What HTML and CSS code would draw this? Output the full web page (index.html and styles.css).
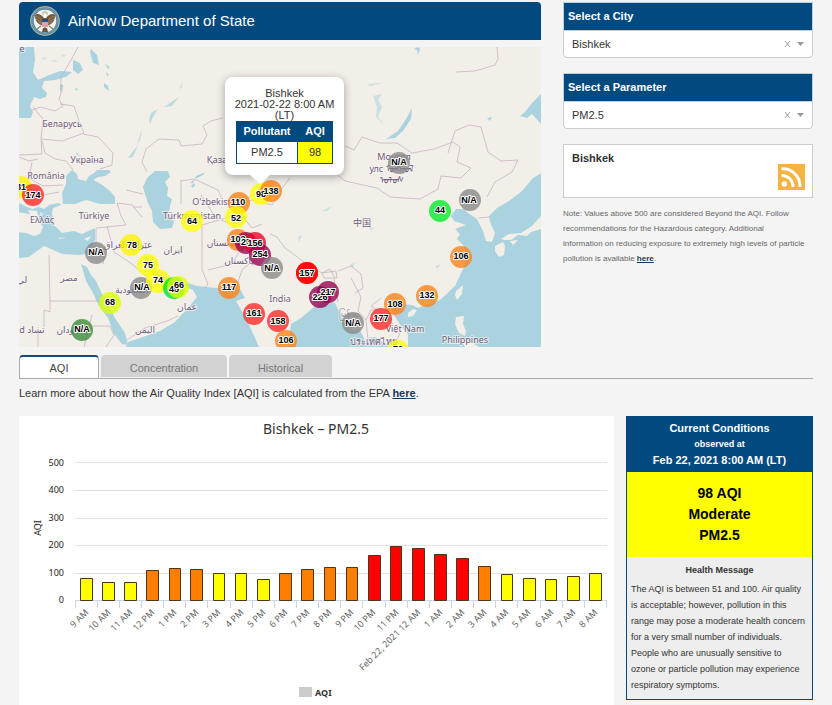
FILE: index.html
```html
<!DOCTYPE html>
<html lang="en">
<head>
<meta charset="utf-8">
<title>AirNow Department of State</title>
<link rel="stylesheet" href="styles.css">
</head>
<body>
<main class="page">
  <div class="top">
    <section class="primary">
      <header class="banner">
        <svg class="seal" viewBox="0 0 32 32" aria-hidden="true">
          <circle cx="16" cy="16" r="15" fill="#5d86a3"/>
          <circle cx="16" cy="16" r="14.4" fill="none" stroke="#a9b793" stroke-width="1"/>
          <circle cx="16" cy="16" r="12.7" fill="none" stroke="#7fa3b8" stroke-width="1.2" stroke-dasharray="1 1"/>
          <circle cx="16" cy="16" r="11.2" fill="#f4f6f5"/>
          <circle cx="16" cy="8.7" r="2.6" fill="#b9cfdf" stroke="#d8bd76" stroke-width=".7"/>
          <path d="M15 13C12 9 8 8 6 10c0 4 1 7 4 9l4 2 2-3 2 3 4-2c3-2 4-5 4-9-2-2-6-1-9 3l-1-3z" fill="#74583d"/>
          <path d="M7 11l6 4M7 14l6 3M9 17l5 2M25 11l-6 4M25 14l-6 3M23 17l-5 2" stroke="#b79d72" stroke-width=".6"/>
          <path d="M14 10l2-2 2 2-1 3h-2z" fill="#fff8e5"/>
          <path d="M13 15h6v5c0 2-1 3-3 4-2-1-3-2-3-4z" fill="#fff"/>
          <path d="M14 17v5M16 17v6M18 17v5" stroke="#bd4651" stroke-width="1"/>
          <path d="M13 14h6v3h-6z" fill="#294f82"/>
          <path d="M12 21l-4 3M20 21l4 3M14 25h4" stroke="#7d8c4b" stroke-width="1.4"/>
          <path d="M14 23l-1 4h6l-1-4z" fill="#6c543d"/>
        </svg>
        <h1>AirNow Department of State</h1>
      </header>
      <div class="map">
        <svg class="map-canvas" viewBox="19 47 522 300" preserveAspectRatio="xMidYMid slice" role="img" aria-label="Map of reporting cities">
          <g class="water">
            <path d="M19 47h15l1 13-2 12 5 8 9-4 13-5 12 1-6 5-11 3-11 1-2 7 5 5-1 4-6 2-6-2-4 9 3 6-2 6H19z"/>
            <path d="M60 84l3 1-1 8-2-3zM73 60l7 3 3 7-5 4-5-4zM91 49l6 6 2 10-6-2-3-11zM104 83l4 3 1 5-5-4zM75 88l3 1-2 2zM105 64l5 3-2 2zM106 72l3 3-2 1z"/>
            <path d="M66 176l6-6 5 4 1 5 8 2 3-5 5-3 3-3 12 0 2 2-6 4-7 1-5 3 8 4 9 7 5 6v7l-15 0-14-4-11 4-12 0-1-11 4-9z"/>
            <path d="M143 187l4-9 8-7h13l2 6-5 5 3 6-1 8 5 3-2 7-1 8 5 8-2 6-12 1-7-7-1-11-4-8-3-9z"/>
            <path d="M190 183l5-4 1-3 7-3 2 1-6 3-4 2-2 4zM191 186l3-3 1 2-2 3z"/>
            <path d="M19 203l6 3 7 3 7-2 5 2 5-4 10-2 2 2-8 3-1 6 2 11 8 8 12-2 8 3 13-6v11l-4 14-11 2-18-1-11-5-7-3-7 5-8 6-11 1v-26l8 1 8 3 6-2 3-7-5-7-9-6-11-2z"/>
            <path d="M81 264l6 3 4 8 5 6 6 13 6 10 7 14 10 15 3 12-6-1-8-10-6-16-9-12-6-13-7-12z"/>
            <path d="M143 255l7 4 8 14 12 8 10 5 8-3 9 3 30 3h13l5 9-9 3 7 12 6 12 7 15 3 7H126l2-5 12-4 20-7 15-9 13-14 9-11-4-7-9-4-11 1-8-2-9-7-8-12z"/>
            <path d="M288 347l3-23 10-6 13-11 12-6 9 2 5 10 4 8 8 10 7-2 5 9 2 9z"/>
            <path d="M365 347l3-9 7-1 6 4 10 6z"/>
            <path d="M408 347v-13l-7-8-9-14v-5l8-3 12 1 6 3 10-4 12-4 15-14 8-17 4-14-4-10-6-6 3-5-5-5 11-4-12-4-3-5 5-7h8l4 4 9 6 6 12 3 10 6 1 3-9-5-11-1-6 8-8 12-7 13-10 11-13 10-6v185z"/>
            <path d="M541 94l-9 9-7 9-5 4 7 2 5-4 9 10zM412 108l-1 11-8 12-8 7-9 1 12-8 8-12zM418 47l2 2-2 6-1-5-3-1zM487 118l5-1-2 4z"/>
            <path d="M151 113l7-4-5 8-3 7-1-5zM164 107l15-10-7 9zM180 88l3-6-2 7zM128 158l10-13-5 12zM137 144l5-15-2 11zM75 152l9 6-7-3z" opacity=".75"/>
            <path d="M367 84l15-1-12 3zM373 96l9-2-4 6 4 7-4 10 6 8-8-8 1-10zM322 211l10-5-5 5zM369 227l5 1-3 3zM436 266l5-2-4 5zM350 265l5-3-2 6zM298 237l4-2-3 7zM42 58l5-1-3 3zM52 60l6 1-4 1zM62 54l4 2-4 1z" opacity=".55"/>
          </g>
          <g class="land">
            <path d="M495 246l8-4 2 4-1 9-5 2-4-6zM501 239l8-5 12-1 11-7 9-10v13l-10 3-4 4-9-1-7 5-7 0zM506 186l7-7h12l-8 12-8 3zM510 241l8-1-5 5zM456 291l7-6-1 9-5 6-2-5zM408 313l5-4 4 1-4 6-5 1zM456 317l8-1-1 8 3 7-1 5-6-3-4-9zM461 338l8 3 10 6h-14zM395 300l4 2-2 5z"/>
            <path d="M28 210l9 1 2 8 3 9-7-4zM58 238l8-1-6 2zM84 239l7-3-3 5zM40 212l3 2-2 2z"/>
          </g>
          <path class="borders" d="M78 47l-8 15-9 15v16l-2 6 4 7-8 5-15-4-8 3M60 104l14 2 5 15 5 12-22 8-21-2 2-20-10-12M41 139l1 15-23 1M42 141l3 12 10 6 11 2 7 9M83 134l15 3 15 16-1 12-12 4M19 157l10 4 9-2M32 162l-3 16 14 8 20-1M27 190l16 5 16-3M117 203l15 2 10 12M117 203l4 13 5 9-30 3M126 190l17 4M133 207l9 0M142 162l4-13 13-10 20 1 2 6 21-2 5-9-4-9 8-5 12-3M142 162l5 10M181 180v24M181 181l13-2 24 11 6 14 7-6 17 0 12-9 14-5M201 195l15 23 13 5 14-6 9 11 10-4M243 217l-4-12 13-5 20 5 8-14 10-13M202 225v45l6 14-3 4M202 225l27-8M208 270l24-6 8-14 12-7 8-9M236 288l6-18 13-11 15-9M270 234l7 3 8 11 23 17 14 8 8-4 5 9M322 273l14-2 1 7h-13zM334 279l4 23M338 271l13-5 10 8 2 14-8 5M345 146l9 4 8-13 18 6 17 0 15 10 22-4 19-7 7 5-3 15 14 6-10 10-20-2-3 13-18 10-30-2-13-9-32-7-11-9M448 153l7-22 14-6 12 2 7 25 13 9 17-1-6 12-17 10-8 15M497 47l1 12-3 6-20 6-19 1M49 255l1 46h57M50 300v12l-6-2v22l-6 2v13M96 229v14l-3 12M107 226l7 26 18 12 16 14M127 340l18-12 22-7 11-5M351 278l10 19-3 14 8 9 5-10 10 0M366 320l2 20M381 298l-10 8 17 12 12 16-5 8M478 218l12-1M92 326l18 0 4 9-8 12M92 315l-8 32M105 253l-2 11"/>
          <g class="places">
            <text x="22" y="52">e</text><text x="62" y="127">Беларусь</text><text x="87" y="163">Україна</text><text x="46" y="179">România</text><text x="229" y="163">Қазақстан</text>
            <text x="42" y="223">Ελλάς</text><text x="94" y="219">Türkiye</text><text x="217" y="205">O'zbekiston</text><text x="192" y="219">Türkmenistan</text>
            <text x="128" y="248">عێراق العراق</text><text x="173" y="253">ایران</text><text x="225" y="246">افغانستان</text><text x="239" y="264">پاکستان</text>
            <text x="69" y="281">مصر</text><text x="132" y="293">السعودية</text><text x="187" y="310">عمان</text><text x="145" y="333">اليمن</text><text x="72" y="333">السودان</text><text x="36" y="333">تشاد</text><text x="22" y="333">d</text><text x="22" y="283">لي</text>
            <text x="280" y="302">India</text><text x="362" y="226">中国</text><text x="394" y="160">Монгол</text><text x="391" y="172">улс ᠮᠣᠩᠭᠣᠯ</text><text x="392" y="183">ᠤᠯᠤᠰ</text>
            <text x="405" y="332">Việt Nam</text><text x="373" y="345">ประเทศไทย</text><text x="465" y="343">Philippines</text><text x="349" y="317">မြန်မာ</text>
          </g>
          <g class="pins">
            <circle cx="21" cy="187" r="11" fill="#fff200"/><circle cx="33" cy="195" r="11" fill="#ff2626"/>
            <circle cx="96" cy="253" r="11" fill="#888"/><circle cx="131" cy="245" r="11" fill="#fff200"/>
            <circle cx="141" cy="288" r="11" fill="#888"/><circle cx="148" cy="265" r="11" fill="#ff0"/>
            <circle cx="158" cy="281" r="12" fill="#ff0"/><circle cx="174" cy="288" r="11" fill="#0d3"/>
            <circle cx="178" cy="287" r="11" fill="#df0"/><circle cx="110" cy="303" r="11" fill="#df0"/>
            <circle cx="82" cy="330" r="11" fill="#398a39"/><circle cx="192" cy="221" r="11" fill="#ff0"/>
            <circle cx="239" cy="203" r="11" fill="#ff8214"/><circle cx="236" cy="217" r="11" fill="#ff0"/>
            <circle cx="261" cy="194" r="11" fill="#ff0"/><circle cx="271" cy="191" r="11" fill="#ff8214"/>
            <circle cx="238" cy="240" r="11" fill="#ff8214"/><circle cx="246" cy="243" r="11" fill="#960050"/>
            <circle cx="255" cy="243" r="11" fill="#f00028"/><circle cx="260" cy="255" r="11" fill="#960050"/>
            <circle cx="272" cy="268" r="11" fill="#888"/><circle cx="229" cy="288" r="11" fill="#ff8214"/>
            <circle cx="254" cy="314" r="11" fill="#ff2626"/><circle cx="278" cy="321" r="11" fill="#ff2626"/>
            <circle cx="286" cy="341" r="11" fill="#ff8214"/><circle cx="307" cy="273" r="11" fill="#f00"/><circle cx="307" cy="273" r="11" fill="#f00"/>
            <circle cx="320" cy="297" r="11" fill="#960050"/><circle cx="328" cy="292" r="11" fill="#960050"/>
            <circle cx="353" cy="323" r="11" fill="#888"/><circle cx="395" cy="304" r="11" fill="#ff8214"/>
            <circle cx="381" cy="319" r="11" fill="#ff2626"/><circle cx="427" cy="296" r="11" fill="#ff8214"/>
            <circle cx="461" cy="257" r="11" fill="#ff8214"/><circle cx="440" cy="211" r="11" fill="#00eb28"/>
            <circle cx="470" cy="200" r="11" fill="#888"/><circle cx="399" cy="163" r="11" fill="#888"/>
            <circle cx="398" cy="351" r="11" fill="#ff0"/>
            <text x="21" y="190">81</text><text x="33" y="198">174</text><text x="96" y="255">N/A</text><text x="132" y="248">78</text>
            <text x="142" y="290">N/A</text><text x="148" y="268">75</text><text x="158" y="283">74</text><text x="174" y="292">45</text>
            <text x="179" y="288">66</text><text x="110" y="305">68</text><text x="82" y="332">N/A</text><text x="192" y="224">64</text>
            <text x="238" y="205">110</text><text x="236" y="221">52</text><text x="261" y="197">98</text><text x="271" y="194">138</text>
            <text x="238" y="242">102</text><text x="246" y="245">25</text><text x="255" y="246">156</text><text x="260" y="257">254</text>
            <text x="272" y="271">N/A</text><text x="229" y="290">117</text><text x="254" y="316">161</text><text x="278" y="324">158</text>
            <text x="286" y="343">106</text><text x="307" y="276">157</text><text x="320" y="300">226</text><text x="328" y="295">217</text>
            <text x="353" y="326">N/A</text><text x="395" y="307">108</text><text x="381" y="321">177</text><text x="427" y="298">132</text>
            <text x="461" y="259">106</text><text x="440" y="213">44</text><text x="469" y="203">N/A</text><text x="399" y="165">N/A</text>
            <text x="398" y="352">72</text>
          </g>
        </svg>
        <div class="popup">
          <p>Bishkek<br>2021-02-22 8:00 AM<br>(LT)</p>
          <table>
            <thead><tr><th>Pollutant</th><th>AQI</th></tr></thead>
            <tbody><tr><td>PM2.5</td><td class="moderate">98</td></tr></tbody>
          </table>
        </div>
      </div>
    </section>
    <aside class="side">
      <label class="side-title" for="city">Select a City</label>
      <div class="picker">
        <select id="city"><option>Bishkek</option></select>
        <button type="button" aria-label="Clear city"><svg viewBox="0 0 7 8"><path d="M1 1l5 6M6 1L1 7"/></svg></button>
        <svg class="caret" viewBox="0 0 7 4" aria-hidden="true"><path d="M0 0h7L3.500 4z"/></svg>
      </div>
      <label class="side-title" for="parameter">Select a Parameter</label>
      <div class="picker">
        <select id="parameter"><option>PM2.5</option></select>
        <button type="button" aria-label="Clear parameter"><svg viewBox="0 0 7 8"><path d="M1 1l5 6M6 1L1 7"/></svg></button>
        <svg class="caret" viewBox="0 0 7 4" aria-hidden="true"><path d="M0 0h7L3.500 4z"/></svg>
      </div>
      <div class="feed">
        <strong>Bishkek</strong>
        <a href="#feed" aria-label="RSS feed"><svg class="rss" viewBox="0 0 27 26"><path fill="#f5b340" d="M0 0h27v26H0z"/><circle cx="6.300" cy="20" r="2.800" fill="#fff"/><path d="M3.500 11.500A11 11 0 0 1 15 23M3.500 4.800A17.500 17.500 0 0 1 22 23" fill="none" stroke="#fff" stroke-width="3"/></svg></a>
      </div>
      <p class="note">Note: Values above 500 are considered Beyond the AQI. Follow recommendations for the Hazardous category. Additional<br>information on reducing exposure to extremely high levels of particle pollution is available <a href="#beyond">here</a>.</p>
    </aside>
  </div>
  <nav class="tabs">
    <button type="button" class="tab tab-active">AQI</button>
    <button type="button" class="tab tab-wide">Concentration</button>
    <button type="button" class="tab">Historical</button>
  </nav>
  <p class="learn">Learn more about how the Air Quality Index [AQI] is calculated from the EPA <a href="#epa">here</a>.</p>
  <div class="bottom">
    <section class="chart">
      <svg viewBox="19 416 595 289" role="img" aria-label="Bishkek PM2.5 hourly AQI">
        <text class="chart-title" x="316" y="434">Bishkek – PM2.5</text>
        <path class="grid" d="M75 462.500h532M75 490.500h532M75 518.500h532M75 545.500h532M75 573.500h532"/>
        <g class="scale"><text x="64" y="466">500</text><text x="64" y="493">400</text><text x="64" y="521">300</text><text x="64" y="548">200</text><text x="64" y="576">100</text><text x="64" y="603">0</text></g>
        <text class="axis-name" transform="translate(41 528) rotate(-90)">AQI</text>
        <path class="axis" d="M75 600.500h532M75.500 600v8M97.500 600v8M119.500 600v8M141.500 600v8M163.500 600v8M185.500 600v8M207.500 600v8M230.500 600v8M252.500 600v8M274.500 600v8M296.500 600v8M318.500 600v8M340.500 600v8M362.500 600v8M385.500 600v8M407.500 600v8M429.500 600v8M451.500 600v8M473.500 600v8M495.500 600v8M517.500 600v8M540.500 600v8M562.500 600v8M584.500 600v8M606.500 600v8"/>
        <g class="bars">
          <g fill="#ff0"><path d="M80.500 600.500v-22h12v22zM102.500 600.500v-18h12v18zM124.500 600.500v-18h12v18zM213.500 600.500v-27h11v27zM235.500 600.500v-27h11v27zM257.500 600.500v-21h12v21zM501.500 600.500v-26h11v26zM523.500 600.500v-22h12v22zM545.500 600.500v-21h11v21zM567.500 600.500v-24h12v24zM589.500 600.500v-27h12v27z"/></g>
          <g fill="#ff7e00"><path d="M146.500 600.500v-30h12v30zM169.500 600.500v-32h11v32zM190.500 600.500v-31h12v31zM279.500 600.500v-27h12v27zM301.500 600.500v-31h12v31zM324.500 600.500v-33h11v33zM346.500 600.500v-33h11v33zM478.500 600.500v-34h12v34z"/></g>
          <g fill="red"><path d="M368.500 600.500v-45h12v45zM390.500 600.500v-54h11v54zM412.500 600.500v-52h12v52zM434.500 600.500v-46h12v46zM456.500 600.500v-42h12v42z"/></g>
        </g>
        <g class="hours">
          <text transform="translate(89 613) rotate(-45)">9 AM</text><text transform="translate(111 613) rotate(-45)">10 AM</text><text transform="translate(133 613) rotate(-45)">11 AM</text><text transform="translate(155 613) rotate(-45)">12 PM</text><text transform="translate(177 613) rotate(-45)">1 PM</text><text transform="translate(199 613) rotate(-45)">2 PM</text><text transform="translate(221 613) rotate(-45)">3 PM</text><text transform="translate(244 613) rotate(-45)">4 PM</text><text transform="translate(266 613) rotate(-45)">5 PM</text><text transform="translate(288 613) rotate(-45)">6 PM</text><text transform="translate(310 613) rotate(-45)">7 PM</text><text transform="translate(332 613) rotate(-45)">8 PM</text><text transform="translate(354 613) rotate(-45)">9 PM</text><text transform="translate(376 613) rotate(-45)">10 PM</text><text transform="translate(399 613) rotate(-45)">11 PM</text><text transform="translate(421 613) rotate(-45)">Feb 22, 2021 12 AM</text><text transform="translate(443 613) rotate(-45)">1 AM</text><text transform="translate(465 613) rotate(-45)">2 AM</text><text transform="translate(487 613) rotate(-45)">3 AM</text><text transform="translate(509 613) rotate(-45)">4 AM</text><text transform="translate(531 613) rotate(-45)">5 AM</text><text transform="translate(554 613) rotate(-45)">6 AM</text><text transform="translate(576 613) rotate(-45)">7 AM</text><text transform="translate(598 613) rotate(-45)">8 AM</text>
        </g>
        <path fill="#ccc" d="M299 687h13v10h-13z"/><text class="legend" x="315" y="696">AQI</text>
      </svg>
    </section>
    <aside class="conditions">
      <header><h2>Current Conditions</h2><small>observed at</small><strong>Feb 22, 2021 8:00 AM (LT)</strong></header>
      <p class="reading">98 AQI<br>Moderate<br>PM2.5</p>
      <h3>Health Message</h3>
      <p class="message">The AQI is between 51 and 100. Air quality is acceptable; however, pollution in this range may pose a moderate health concern for a very small number of individuals. People who are unusually sensitive to ozone or particle pollution may experience respiratory symptoms.</p>
    </aside>
  </div>
</main>
</body>
</html>
```
FILE: styles.css
```css
* { box-sizing: border-box; }
body { margin: 0; background: #f4f4f4; color: #333; font: 11px/16px "Liberation Sans", Arial, sans-serif; }
h1, h2, h3, p { margin: 0; }
button, select { font: inherit; color: inherit; }
a { color: #12395f; font-weight: bold; text-decoration: underline; }
.page { padding: 2px 19px 0; }
.top { display: grid; grid-template-columns: minmax(0, 1fr) 250px; gap: 22px; }
.banner { display: flex; align-items: center; gap: 7px; height: 38px; padding: 0 10px; background: #004a80; color: #fff; border-radius: 4px 4px 0 0; }
.banner h1 { font-size: 15px; line-height: 20px; font-weight: normal; }
.seal { width: 32px; height: 32px; }
.map { position: relative; height: 300px; margin-top: 7px; overflow: hidden; background: #f2efe9; }
.map-canvas { display: block; width: 100%; height: 100%; }
.water { fill: #aad3df; }
.land { fill: #f2efe9; }
.borders { fill: none; stroke: #c5adc1; stroke-width: 1; opacity: .75; }
.places { font: 9px "Noto Sans", "DejaVu Sans", "Noto Sans CJK SC", sans-serif; fill: #705d7d; text-anchor: middle; stroke: #f8f6f3; stroke-width: 2; paint-order: stroke; stroke-opacity: .7; }
.pins circle { fill-opacity: .78; }
.pins text { font: bold 9px "Liberation Sans", Arial, sans-serif; fill: #000; text-anchor: middle; stroke: #fff; stroke-width: 2; stroke-linejoin: round; paint-order: stroke; }
.popup { position: absolute; left: 206px; top: 30px; width: 119px; padding: 11px; border-radius: 8px; background: #fff; box-shadow: 0 2px 8px #0005; text-align: center; line-height: 11px; white-space: nowrap; }
.popup p { margin: 0 -4px; }
.popup::after { content: ""; position: absolute; left: 25px; top: 98px; border: 10px solid transparent; border-top: 9px solid #fff; border-bottom: 0; }
.popup table { width: 100%; border-collapse: collapse; table-layout: fixed; }
.popup th { height: 20px; padding: 0; background: #004a80; color: #fff; border: 1px solid #004a80; }
.popup th:first-child { width: 61px; }
.popup td { height: 22px; padding: 0; border: 1px solid #004a80; }
.popup .moderate { background: #ff0; }
.side-title { display: block; height: 28px; padding: 5px 4px; border: 1px solid #bccfdf; border-bottom: 0; background: #004a80; color: #fff; font-weight: bold; }
.picker { display: flex; align-items: center; gap: 6px; height: 28px; margin-bottom: 15px; padding: 0 8px; border: 1px solid #ccc; border-radius: 0 0 4px 4px; background: #fff; }
.picker select { flex: 1; min-width: 0; height: 24px; padding: 0; appearance: none; border: 0; background: transparent; }
.picker button { display: flex; padding: 0; border: 0; background: transparent; }
.picker button svg { width: 7px; height: 8px; fill: none; stroke: #999; }
.caret { width: 7px; height: 4px; fill: #999; }
.feed { display: flex; justify-content: space-between; height: 54px; padding: 5px 7px 0 8px; border: 1px solid #ccc; background: #fff; }
.rss { display: block; width: 27px; height: 26px; margin-top: 14px; }
.note { margin-top: 8px; font-size: 8px; line-height: 15px; color: #666; }
.tabs { display: flex; align-items: flex-end; gap: 2px; margin-top: 8px; border-bottom: 1px solid #aaa; }
.tab { width: 103px; height: 22px; padding: 3px 0 0; border: 0; border-radius: 4px 4px 0 0; margin-bottom: 1px; background: #d2d2d2; color: #777; }
.tab-active { width: 80px; height: 23px; padding: 1px 0 0; margin-bottom: 0; border: 1px solid #aaa; border-top: 2px solid #174b78; border-bottom: 0; background: #fff; color: #444; }
.tab-wide { width: 126px; }
.learn { margin: 6px 0 15px; }
.bottom { display: grid; grid-template-columns: minmax(0, 1fr) 187px; gap: 12px; align-items: start; }
.chart { background: #fff; }
.chart svg { display: block; width: 100%; font-family: "Noto Sans", sans-serif; }
.chart-title { font-size: 14px; fill: #333; text-anchor: middle; }
.grid { stroke: #e2e2e2; }
.scale { font-size: 9px; fill: #222; text-anchor: end; }
.axis-name { font-size: 9px; fill: #222; text-anchor: middle; }
.axis { stroke: #ccd6eb; }
.bars { stroke: #493719; stroke-width: 1; }
.hours { font-size: 9px; fill: #666; text-anchor: end; }
.legend { font-size: 9px; font-weight: bold; fill: #333; }
.conditions { border: 1px solid #004a80; background: #eee; }
.conditions header { display: grid; align-content: start; height: 55px; padding-top: 3px; background: #004a80; color: #fff; font-weight: bold; text-align: center; }
.conditions h2 { font-size: 11px; line-height: 16px; }
.conditions small { font-size: 9px; line-height: 16px; }
.reading { height: 85px; padding-top: 11px; background: #ff0; color: #000; font-size: 14px; line-height: 21px; font-weight: bold; text-align: center; }
.conditions h3 { padding-top: 5px; font-size: 9px; line-height: 16px; text-align: center; }
.message { padding: 3px 4px 6px; font-size: 9px; line-height: 16px; }
```
